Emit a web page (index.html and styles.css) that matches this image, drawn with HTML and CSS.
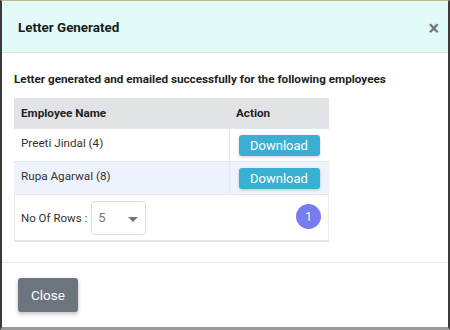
FILE: index.html
```html
<!DOCTYPE html>
<html lang="en">
<head>
  <meta charset="UTF-8" />
  <title>Letter Generated</title>
  <link rel="stylesheet" href="styles.css">
</head>
<body>
  <div class="modal">
    <!-- Header -->
    <div class="modal-header">
      <h2>Letter Generated</h2>
      <span class="close-x">&times;</span>
    </div>
    <!-- Body -->
    <div class="modal-body">
      <p class="message">Letter generated and emailed successfully for the following employees</p>
      <div class="table-box">
        <table>
          <thead>
            <tr>
              <th class="col-name">Employee Name</th>
              <th class="col-action">Action</th>
            </tr>
          </thead>
          <tbody>
            <tr>
              <td>Preeti Jindal (4)</td>
              <td class="col-action"><button class="download-btn">Download</button></td>
            </tr>
            <tr class="alt">
              <td>Rupa Agarwal (8)</td>
              <td class="col-action"><button class="download-btn">Download</button></td>
            </tr>
          </tbody>
        </table>
        <div class="table-footer">
          <div class="rows">
            <span>No Of Rows :</span>
            <div class="select">
              <span>5</span>
              <span class="caret"></span>
            </div>
          </div>
          <span class="page">1</span>
        </div>
      </div>
    </div>
    <!-- Footer -->
    <div class="modal-footer">
      <button class="close-btn">Close</button>
    </div>
  </div>
</body>
</html>
```

FILE: styles.css
```css
* {
  margin: 0;
  padding: 0;
  box-sizing: border-box;
}
body {
  font-family: Roboto, 'Liberation Sans', sans-serif;
  background-color: #fff;
  color: #212529;
}
.modal {
  width: 450px;
  height: 330px;
  border-left: 2px solid #3a3a3a;
  border-right: 2px solid #3a3a3a;
  border-top: 1px solid #c9b48a;
  border-bottom: 3px solid #9a9a9a;
  display: flex;
  flex-direction: column;
}
/* Header */
.modal-header {
  height: 52px;
  background-color: #e1fbf8;
  border-bottom: 1px solid #dde3e3;
  display: flex;
  align-items: center;
  justify-content: space-between;
  padding: 2px 9px 0 16px;
}
.modal-header h2 {
  font-size: 13.4px;
  font-weight: bold;
  color: #1c1c1c;
}
.close-x {
  font-size: 20px;
  font-weight: bold;
  color: #777;
  line-height: 1;
}
/* Body */
.modal-body {
  padding: 19px 12px 0;
  height: 210px;
  border-bottom: 1px solid #e6e6e6;
}
.message {
  font-size: 11.7px;
  font-weight: bold;
  color: #222;
  margin-bottom: 12px;
}
.table-box {
  width: 315px;
  border-bottom: 2px solid #e2e4e8;
}
table {
  width: 100%;
  border-collapse: collapse;
  font-size: 11.7px;
}
th {
  background-color: #e2e3e6;
  height: 30px;
  text-align: left;
  padding: 0 7px;
  font-weight: bold;
  color: #222;
}
td {
  height: 33px;
  padding: 0 7px 4px;
  border-top: 1px solid #e3e6ea;
  color: #333;
}
th.col-action {
  width: 100px;
  padding-left: 7px;
}
td.col-action {
  border-left: 1px solid #e3e6ea;
  padding: 0 9px;
}
tr.alt td {
  background-color: #eef2fa;
}
.download-btn {
  width: 81px;
  height: 21px;
  background-color: #39b0d2;
  color: #fff;
  border: none;
  border-radius: 3px;
  font-family: Roboto, 'Liberation Sans', sans-serif;
  font-size: 13px;
  box-shadow: 0 1px 3px rgba(0, 0, 0, 0.2);
  margin-top: 1px;
}
.table-footer {
  height: 46px;
  border-top: 1px solid #e3e6ea;
  border-left: 1px solid #e9ebee;
  border-right: 1px solid #e9ebee;
  display: flex;
  align-items: center;
  justify-content: space-between;
  padding: 0 7px 0 6px;
  font-size: 11.5px;
  color: #333;
}
.rows {
  display: flex;
  align-items: center;
  gap: 4px;
}
.select {
  width: 55px;
  height: 34px;
  border: 1px solid #dcdcdc;
  border-radius: 4px;
  display: flex;
  align-items: center;
  justify-content: space-between;
  padding: 0 7px 0 6px;
  font-size: 13px;
  color: #777;
}
.caret {
  width: 0;
  height: 0;
  border-left: 5px solid transparent;
  border-right: 5px solid transparent;
  border-top: 5px solid #777;
  margin-top: 3px;
}
.page {
  width: 25px;
  height: 25px;
  border-radius: 50%;
  background-color: #777cf0;
  color: #fff;
  display: flex;
  align-items: center;
  justify-content: center;
  font-size: 12px;
  margin-top: -2px;
}
/* Footer */
.modal-footer {
  padding: 15px 16px;
}
.close-btn {
  width: 60px;
  height: 34px;
  background-color: #6c757d;
  color: #fff;
  border: none;
  border-radius: 3px;
  font-family: Roboto, 'Liberation Sans', sans-serif;
  font-size: 13.5px;
  box-shadow: 0 2px 4px rgba(0, 0, 0, 0.25);
}
```
